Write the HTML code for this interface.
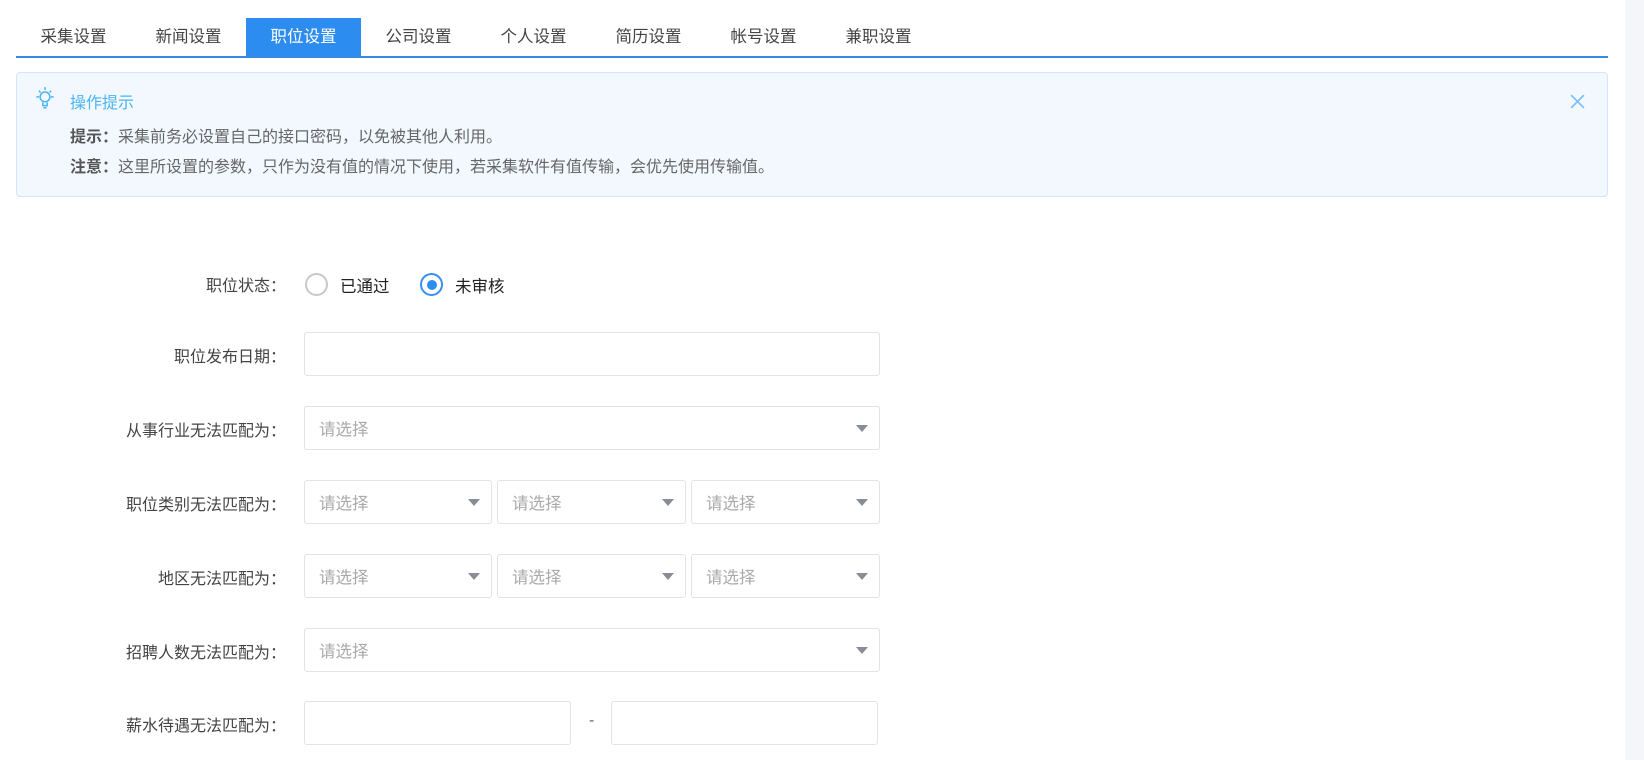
<!DOCTYPE html>
<html><head><meta charset="utf-8"><style>
*{box-sizing:border-box;margin:0;padding:0}
body{width:1644px;height:760px;overflow:hidden;background:#fff;font-family:"Liberation Sans","Noto Sans CJK SC",sans-serif;color:#333;position:relative}
.sb2{position:absolute;left:1625px;top:0;width:19px;height:760px;background:#f4f6f9}
.tabs{position:absolute;left:16px;top:18px;width:1592px;height:40px;border-bottom:2px solid #3a88e0}
.tab{position:absolute;top:0;width:115px;height:38px;line-height:38px;text-align:center;font-size:16.5px;color:#444}
.tab.on{background:#2d8cf0;color:#fff}
.alert{position:absolute;left:16px;top:72px;width:1592px;height:125px;background:#f3f8fe;border:1px solid #d3e6fb;border-radius:4px}
.alert .t{position:absolute;left:53px;top:16px;font-size:16px;color:#4ab4f4}
.alert .l{position:absolute;left:53px;font-size:16px;color:#666}
.alert b{color:#555}
.x{position:absolute;left:1552px;top:20px}
.lab{position:absolute;right:1358px;font-size:16px;color:#444;text-align:right;white-space:nowrap}
.in{position:absolute;height:44px;border:1px solid #e3e3e3;border-radius:3px;background:#fff;font-size:16.5px;color:#aaa;line-height:46px;padding-left:14px}
.in i{position:absolute;right:11px;top:18px;width:0;height:0;border-left:6.5px solid transparent;border-right:6.5px solid transparent;border-top:7px solid #888c94}
.rad{position:absolute;top:273px;width:23px;height:23px;border-radius:50%;border:2px solid #c8c8c8}
.rad.on{border-color:#3a8ef0}
.rad.on:after{content:"";position:absolute;left:4.5px;top:4.5px;width:10px;height:10px;border-radius:50%;background:#2d8cf0}
.rt{position:absolute;top:273px;font-size:16.5px;color:#222}
</style></head><body>
<div class="sb2"></div>
<div class="tabs">
<div class="tab" style="left:0">采集设置</div>
<div class="tab" style="left:115px">新闻设置</div>
<div class="tab on" style="left:230px">职位设置</div>
<div class="tab" style="left:345px">公司设置</div>
<div class="tab" style="left:460px">个人设置</div>
<div class="tab" style="left:575px">简历设置</div>
<div class="tab" style="left:690px">帐号设置</div>
<div class="tab" style="left:805px">兼职设置</div>
</div>
<div class="alert">
<svg style="position:absolute;left:16px;top:12px" width="24" height="26" viewBox="0 0 22 24" fill="none" stroke="#4ab4f4" stroke-width="1.4"><circle cx="11" cy="11" r="4.5"/><path d="M9 16v3h4v-3M9.5 21h3M11 2v2.5M3 11h2.5M16.5 11H19M5.3 5.3l1.6 1.6M16.7 5.3l-1.6 1.6"/></svg>
<div class="t">操作提示</div>
<div class="l" style="top:50px"><b>提示：</b>采集前务必设置自己的接口密码，以免被其他人利用。</div>
<div class="l" style="top:80px"><b>注意：</b>这里所设置的参数，只作为没有值的情况下使用，若采集软件有值传输，会优先使用传输值。</div>
<svg class="x" width="17" height="17" viewBox="0 0 16 16" stroke="#7fbff5" stroke-width="1.6"><path d="M2 2l12 12M14 2L2 14"/></svg>
</div>

<div class="lab" style="top:272px">职位状态：</div>
<div class="rad" style="left:305px"></div><div class="rt" style="left:340px">已通过</div>
<div class="rad on" style="left:420px"></div><div class="rt" style="left:455px">未审核</div>

<div class="lab" style="top:343px">职位发布日期：</div>
<div class="in" style="left:304px;top:332px;width:576px"></div>

<div class="lab" style="top:417px">从事行业无法匹配为：</div>
<div class="in" style="left:304px;top:406px;width:576px">请选择<i></i></div>

<div class="lab" style="top:491px">职位类别无法匹配为：</div>
<div class="in" style="left:304px;top:480px;width:188px">请选择<i></i></div>
<div class="in" style="left:497px;top:480px;width:189px">请选择<i></i></div>
<div class="in" style="left:691px;top:480px;width:189px">请选择<i></i></div>

<div class="lab" style="top:565px">地区无法匹配为：</div>
<div class="in" style="left:304px;top:554px;width:188px">请选择<i></i></div>
<div class="in" style="left:497px;top:554px;width:189px">请选择<i></i></div>
<div class="in" style="left:691px;top:554px;width:189px">请选择<i></i></div>

<div class="lab" style="top:639px">招聘人数无法匹配为：</div>
<div class="in" style="left:304px;top:628px;width:576px">请选择<i></i></div>

<div class="lab" style="top:712px">薪水待遇无法匹配为：</div>
<div class="in" style="left:304px;top:701px;width:267px"></div>
<div style="position:absolute;left:589px;top:712px;font-size:16px;color:#666">-</div>
<div class="in" style="left:611px;top:701px;width:267px"></div>
</body></html>
